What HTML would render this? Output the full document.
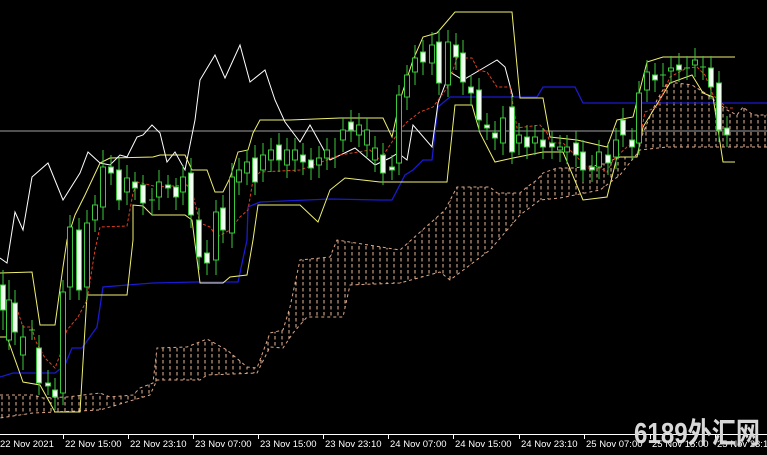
<!DOCTYPE html>
<html><head><meta charset="utf-8"><style>
html,body{margin:0;padding:0;background:#000;overflow:hidden}
svg{display:block}
</style></head><body>
<svg width="767" height="455" viewBox="0 0 767 455" xmlns="http://www.w3.org/2000/svg">
<defs>
<pattern id="cl" width="7" height="6" patternUnits="userSpaceOnUse">
<line x1="2" y1="0" x2="2" y2="3.5" stroke="#e8b898" stroke-width="1"/>
</pattern>
<clipPath id="cc"><polygon points="0,395 15,395 33,395 43,398 67,397 100,393 110,397 133,395 140,388 153,383 157,348 187,347 207,339 227,350 247,367 257,368 270,333 283,330 290,307 300,260 330,257 337,240 400,250 445,210 457,187 490,187 497,193 520,193 527,187 537,180 543,173 557,168 573,168 600,165 620,157 637,157 643,133 657,100 667,83 677,83 692,85 705,93 727,110 737,115 743,107 753,115 767,115 767,147 667,147 640,150 620,175 600,190 560,198 540,200 520,215 490,250 450,280 440,272 400,283 350,285 343,317 307,317 293,333 283,348 270,347 257,373 207,375 200,380 157,380 150,395 100,410 33,413 0,418"/></clipPath>
</defs>
<rect width="767" height="455" fill="#000"/>
<rect x="0" y="80" width="767" height="345" fill="url(#cl)" clip-path="url(#cc)"/>
<polyline fill="none" stroke="#e0a888" stroke-dasharray="3 3" points="0,395 15,395 33,395 43,398 67,397 100,393 110,397 133,395 140,388 153,383 157,348 187,347 207,339 227,350 247,367 257,368 270,333 283,330 290,307 300,260 330,257 337,240 400,250 445,210 457,187 490,187 497,193 520,193 527,187 537,180 543,173 557,168 573,168 600,165 620,157 637,157 643,133 657,100 667,83 677,83 692,85 705,93 727,110 737,115 743,107 753,115 767,115"/>
<polyline fill="none" stroke="#e0a888" stroke-dasharray="3 3" points="767,147 667,147 640,150 620,175 600,190 560,198 540,200 520,215 490,250 450,280 440,272 400,283 350,285 343,317 307,317 293,333 283,348 270,347 257,373 207,375 200,380 157,380 150,395 100,410 33,413 0,418"/>
<line x1="0" y1="131" x2="767" y2="131" stroke="#a0a0a0" stroke-width="1"/>
<polyline fill="none" stroke="#1a1ad0" stroke-width="1.3" points="0,377 13,373 55,373 65,365 72,348 82,348 97,327 103,287 127,285 153,283 197,282 238,282 247,240 248,207 260,202 330,199 380,200 392,200 405,175 413,170 423,160 432,160 435,133 438,107 450,97 537,97 543,87 575,87 583,103 767,103"/>
<g fill="none" stroke="#f0f070" stroke-width="1">
<polyline points="0,273 32,272 40,325 55,325 63,267 67,240 75,215 85,195 100,163 110,158 153,157 160,155 185,155 192,170 207,170 215,192 223,192 230,178 238,152 248,150 253,133 260,120 290,120 340,118 383,118 392,137 400,100 413,60 423,37 437,33 455,12 512,12 520,98 543,98 550,137 577,140 607,147 617,120 633,117 647,62 663,57 735,57"/>
<polyline points="0,337 7,337 23,382 40,385 55,412 80,412 87,295 127,295 133,240 133,205 143,206 152,215 185,215 192,220 200,283 223,283 230,277 247,275 253,240 258,205 300,205 318,222 330,190 345,178 380,182 447,182 455,105 472,105 480,133 495,162 513,158 543,152 563,152 583,200 607,197 613,173 617,157 637,157 643,127 670,83 692,75 703,93 713,97 723,162 735,162"/>
</g>
<polyline fill="none" stroke="#ffffff" stroke-width="1" points="0,258 7,263 15,212 23,230 32,177 48,163 63,200 80,173 88,152 100,163 110,165 120,155 127,157 137,137 143,135 152,125 160,133 167,162 175,152 185,170 195,120 200,80 215,55 225,78 240,45 250,82 265,70 275,100 285,122 300,142 310,125 325,152 330,160 355,148 375,165 390,158 398,153 407,160 413,125 432,147 438,103 450,72 463,80 480,70 497,60 505,67 513,97"/>
<polyline fill="none" stroke="#e04020" stroke-width="1" stroke-dasharray="3 2" points="0,307 15,303 23,327 32,327 35,340 45,358 55,368 60,355 67,330 78,317 87,300 95,250 100,227 127,226 133,193 137,182 150,185 157,187 187,185 193,195 200,223 210,227 217,237 230,230 240,217 248,210 253,180 260,172 300,170 340,155 370,150 380,160 400,130 407,122 420,112 433,107 447,88 457,58 472,58 478,70 487,72 497,87 510,87 517,128 540,125 547,133 550,143 563,143 577,157 587,168 600,168 607,172 613,160 627,147 640,138 645,112 657,107 663,93 670,77 687,68 697,67 705,75 713,95 727,108 735,108"/>
<path fill="none" stroke="#3cc83c" stroke-width="1" d="M3 270V330M9 280V350M15 290V345M23 325V370M32 320V340M39 335V395M48 370V395M55 378V410M63 280V405M70 215V300M79 218V300M87 210V300M95 195V232M103 150V220M111 155V185M119 158V210M127 165V205M135 172V200M143 175V215M152 188V215M159 170V210M168 175V198M176 178V210M183 165V205M191 158V228M199 208V270M207 240V275M216 200V275M223 195V243M232 163V248M239 158V195M247 150V185M255 145V195M263 143V182M271 138V172M279 133V172M287 138V178M295 138V172M303 143V175M311 148V180M319 146V178M327 138V170M335 138V168M343 118V152M351 110V142M359 113V147M367 118V157M375 136V172M383 143V185M392 155V180M399 85V175M407 65V110M415 45V85M423 40V75M432 32V75M439 30V95M448 30V97M456 33V70M463 40V95M471 75V105M479 78V132M487 113V140M495 121V150M503 106V155M512 95V164M519 123V155M527 125V159M535 125V155M543 128V159M552 131V159M560 135V162M567 135V164M576 131V167M583 140V182M592 155V182M599 140V179M608 143V175M616 128V169M623 108V147M632 128V159M639 81V155M647 60V102M655 63V92M663 63V87M671 56V83M679 53V82M687 56V80M695 48V77M703 56V80M711 56V99M719 71V142M727 116V147"/>
<g fill="#000" stroke="#3cc83c" stroke-width="1">
<rect x="6.5" y="300" width="5" height="40"/><rect x="20.5" y="337" width="5" height="18"/><rect x="60.5" y="292" width="5" height="101"/><rect x="67.5" y="227" width="5" height="60"/><rect x="84.5" y="223" width="5" height="64"/><rect x="92.5" y="205" width="5" height="15"/><rect x="100.5" y="167" width="5" height="40"/><rect x="124.5" y="178" width="5" height="14"/><rect x="156.5" y="182" width="5" height="15"/><rect x="180.5" y="177" width="5" height="15"/><rect x="213.5" y="212" width="5" height="48"/><rect x="229.5" y="177" width="5" height="56"/><rect x="236.5" y="170" width="5" height="12"/><rect x="244.5" y="162" width="5" height="11"/><rect x="260.5" y="155" width="5" height="15"/><rect x="268.5" y="150" width="5" height="10"/><rect x="284.5" y="150" width="5" height="15"/><rect x="292.5" y="150" width="5" height="10"/><rect x="316.5" y="158" width="5" height="7"/><rect x="324.5" y="150" width="5" height="8"/><rect x="340.5" y="130" width="5" height="10"/><rect x="356.5" y="125" width="5" height="10"/><rect x="364.5" y="130" width="5" height="15"/><rect x="372.5" y="148" width="5" height="12"/><rect x="396.5" y="95" width="5" height="68"/><rect x="404.5" y="75" width="5" height="22"/><rect x="412.5" y="58" width="5" height="14"/><rect x="429.5" y="45" width="5" height="18"/><rect x="445.5" y="42" width="5" height="43"/><rect x="500.5" y="118" width="5" height="25"/><rect x="516.5" y="135" width="5" height="8"/><rect x="532.5" y="137" width="5" height="6"/><rect x="557.5" y="147" width="5" height="3"/><rect x="564.5" y="147" width="5" height="5"/><rect x="596.5" y="152" width="5" height="15"/><rect x="613.5" y="140" width="5" height="17"/><rect x="636.5" y="93" width="5" height="50"/><rect x="644.5" y="72" width="5" height="18"/><rect x="668.5" y="68" width="5" height="3"/><rect x="692.5" y="60" width="5" height="5"/>
</g>
<g fill="#f0fff0" stroke="#3cc83c" stroke-width="1">
<rect x="0.5" y="285" width="5" height="25"/><rect x="12.5" y="303" width="5" height="29"/><rect x="36.5" y="348" width="5" height="35"/><rect x="45.5" y="383" width="5" height="3"/><rect x="52.5" y="390" width="5" height="7"/><rect x="76.5" y="230" width="5" height="60"/><rect x="108.5" y="167" width="5" height="6"/><rect x="116.5" y="170" width="5" height="30"/><rect x="132.5" y="182" width="5" height="6"/><rect x="140.5" y="185" width="5" height="18"/><rect x="165.5" y="185" width="5" height="3"/><rect x="173.5" y="187" width="5" height="10"/><rect x="188.5" y="173" width="5" height="42"/><rect x="196.5" y="220" width="5" height="37"/><rect x="204.5" y="253" width="5" height="10"/><rect x="220.5" y="208" width="5" height="22"/><rect x="252.5" y="158" width="5" height="24"/><rect x="276.5" y="145" width="5" height="15"/><rect x="300.5" y="155" width="5" height="7"/><rect x="308.5" y="160" width="5" height="8"/><rect x="348.5" y="122" width="5" height="8"/><rect x="380.5" y="155" width="5" height="18"/><rect x="389.5" y="167" width="5" height="3"/><rect x="420.5" y="52" width="5" height="10"/><rect x="436.5" y="42" width="5" height="41"/><rect x="453.5" y="45" width="5" height="12"/><rect x="460.5" y="53" width="5" height="29"/><rect x="468.5" y="87" width="5" height="6"/><rect x="476.5" y="90" width="5" height="30"/><rect x="484.5" y="125" width="5" height="3"/><rect x="492.5" y="133" width="5" height="5"/><rect x="509.5" y="107" width="5" height="45"/><rect x="524.5" y="137" width="5" height="10"/><rect x="540.5" y="140" width="5" height="7"/><rect x="549.5" y="143" width="5" height="4"/><rect x="573.5" y="143" width="5" height="12"/><rect x="580.5" y="152" width="5" height="18"/><rect x="589.5" y="167" width="5" height="3"/><rect x="605.5" y="155" width="5" height="8"/><rect x="620.5" y="120" width="5" height="15"/><rect x="629.5" y="140" width="5" height="7"/><rect x="652.5" y="75" width="5" height="5"/><rect x="676.5" y="65" width="5" height="5"/><rect x="708.5" y="68" width="5" height="19"/><rect x="716.5" y="83" width="5" height="47"/><rect x="724.5" y="128" width="5" height="7"/>
</g>
<path stroke="#3cc83c" d="M29 330H35M149 200H155M660 75H666M684 68H690M700 67H706"/>
<line x1="0" y1="434.5" x2="767" y2="434.5" stroke="#ffffff" stroke-width="1"/>
<path stroke="#fff" d="M63.5 434V439M128.5 434V439M193.5 434V439M258.5 434V439M323.5 434V439M388.5 434V439M453.5 434V439M519.5 434V439M584.5 434V439M650.5 434V439M715.5 434V439"/>
<g fill="#ffffff" font-family="Liberation Sans, sans-serif" font-size="9.5">
<text x="0" y="447">22 Nov 2021</text>
<text x="65" y="447">22 Nov 15:00</text>
<text x="130" y="447">22 Nov 23:10</text>
<text x="195" y="447">23 Nov 07:00</text>
<text x="260" y="447">23 Nov 15:00</text>
<text x="325" y="447">23 Nov 23:10</text>
<text x="390" y="447">24 Nov 07:00</text>
<text x="455" y="447">24 Nov 15:00</text>
<text x="521" y="447">24 Nov 23:10</text>
<text x="586" y="447">25 Nov 07:00</text>
<text x="652" y="447">25 Nov 15:00</text>
<text x="717" y="447">25 Nov 23:10</text>
</g>
<text x="634" y="443" fill="#d8d8d8" font-family="Liberation Sans, Noto Sans CJK SC, sans-serif" font-size="29" font-weight="bold" textLength="126" lengthAdjust="spacingAndGlyphs">6189外汇网</text>
</svg>
</body></html>
